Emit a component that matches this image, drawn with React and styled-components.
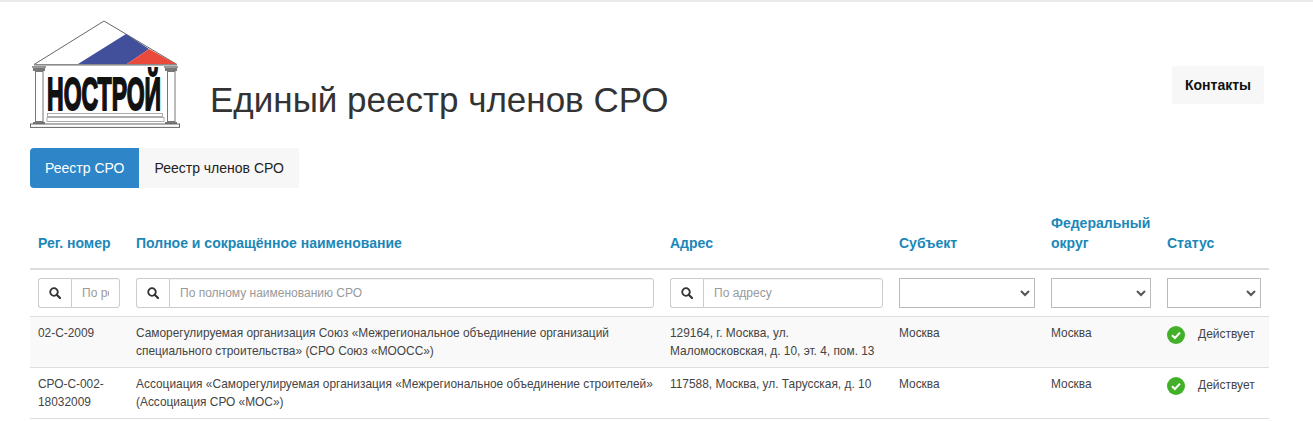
import React from "react";
import styled, { createGlobalStyle } from "styled-components";

const Global = createGlobalStyle`
  html, body {
    margin: 0;
    padding: 0;
    background: #fff;
    font-family: "Liberation Sans", Arial, sans-serif;
    color: #333;
  }
  * { box-sizing: border-box; }
`;

const Page = styled.div`
  width: 1313px;
  height: 421px;
  overflow: hidden;
  border-top: 2px solid #e9e9e9;
  padding: 18px 44px 0 30px;
`;

const Header = styled.header`
  display: flex;
  align-items: flex-start;
  height: 128px;
`;

const Title = styled.h1`
  margin: 58px 0 0 30px;
  font-size: 35px;
  line-height: 44px;
  font-weight: 400;
  flex: 1;
`;

const ContactButton = styled.a`
  margin: 46px 5px 0 0;
  width: 92px;
  height: 38px;
  display: flex;
  align-items: center;
  justify-content: center;
  background: #f7f7f7;
  border-radius: 3px;
  color: #111;
  font-size: 14px;
  font-weight: 700;
`;

const Tabs = styled.nav`
  display: flex;
  height: 40px;
`;

const Tab = styled.a`
  display: flex;
  align-items: center;
  padding: 0 15px;
  font-size: 14px;
  color: ${(p) => (p.$active ? "#fff" : "#222")};
  background: ${(p) => (p.$active ? "#2e86c9" : "#f7f7f7")};
  border-radius: ${(p) => (p.$active ? "4px 0 0 4px" : "0")};
`;

const Table = styled.table`
  width: 1239px;
  margin-top: 17px;
  border-collapse: collapse;
  table-layout: fixed;
  font-size: 11.9px;
  line-height: 18px;
`;

const HeadCell = styled.th`
  padding: 8px 8px 15px;
  height: 63px;
  vertical-align: bottom;
  text-align: left;
  font-size: 14px;
  line-height: 20px;
  font-weight: 700;
  color: #1b87b8;
  border-bottom: 2px solid #ddd;
`;

const FilterCell = styled.td`
  padding: 8px;
  height: 47px;
  border-bottom: 1px solid #ddd;
`;

const Row = styled.tr`
  background: ${(p) => (p.$odd ? "#f9f9f9" : "#fff")};
`;

const Cell = styled.td`
  padding: 7px 8px;
  height: 50px;
  vertical-align: top;
  color: #444;
  border-bottom: 1px solid #ddd;
`;

const InputGroup = styled.div`
  display: flex;
  height: 30px;
`;

const SearchAddon = styled.span`
  flex: none;
  width: 33px;
  display: flex;
  align-items: center;
  justify-content: center;
  border: 1px solid #ccc;
  border-right: 0;
  border-radius: 3px 0 0 3px;
  color: #333;
`;

const SearchInput = styled.input`
  flex: 1;
  min-width: 0;
  width: 100%;
  height: 30px;
  padding: 0 10px;
  border: 1px solid #ccc;
  border-radius: 0 3px 3px 0;
  outline: 0;
  font: 12px "Liberation Sans", Arial, sans-serif;
  box-shadow: inset 0 1px 1px rgba(0, 0, 0, 0.05);
  &::placeholder {
    color: #999;
    opacity: 1;
  }
`;

const SelectBox = styled.div`
  height: 30px;
  width: ${(p) => p.$width}px;
  display: flex;
  align-items: center;
  justify-content: flex-end;
  padding-right: 1px;
  border: 1px solid #bbb;
  background: #fff;
  color: #555;
`;

const StatusLine = styled.div`
  display: flex;
  align-items: flex-start;
  gap: 13px;
`;

const StatusText = styled.span`
  margin-top: 1px;
  font-size: 12px;
`;

const StatusIcon = styled.svg`
  flex: none;
  margin-top: 2px;
`;

function Logo() {
  return (
    <svg width="150" height="108" viewBox="0 0 150 108">
      <polygon points="4,44.5 74,1 147,44.5" fill="#fff" stroke="#555" strokeWidth="0.9" />
      <polygon points="48,44 96,14 119,29 97,44" fill="#42509b" />
      <polygon points="97,44 119,29 146,44" fill="#ea4a3c" />
      <rect x="4" y="44" width="143" height="1.6" fill="#8a8a8a" />
      <rect x="2" y="46" width="14" height="2" fill="#999" />
      <rect x="3" y="48" width="12" height="3" fill="#777" />
      <rect x="134" y="46" width="14" height="2" fill="#999" />
      <rect x="135" y="48" width="12" height="3" fill="#777" />
      <rect x="5.5" y="51.5" width="7.5" height="50" fill="#fff" stroke="#777" />
      <rect x="137.5" y="51.5" width="7.5" height="50" fill="#fff" stroke="#777" />
      <rect x="3" y="102" width="12" height="2" fill="#777" />
      <rect x="135" y="102" width="12" height="2" fill="#777" />
      <text
        transform="translate(17 90) scale(0.49 1)"
        fontFamily='"Liberation Sans", Arial, sans-serif'
        fontWeight="700"
        fontSize="47"
        fill="#111"
        stroke="#111"
        strokeWidth="2"
      >
        НОСТРОЙ
      </text>
      <rect x="17.5" y="93.5" width="115" height="3" fill="#fff" stroke="#999" strokeWidth="0.8" />
      <rect x="17" y="97.5" width="117" height="4" fill="#fff" stroke="#999" strokeWidth="0.8" />
      <rect x="0.5" y="104" width="149" height="3.4" fill="#fff" stroke="#666" />
    </svg>
  );
}

function SearchGlyph() {
  return (
    <svg width="12" height="12" viewBox="0 0 12 12" fill="none" stroke="#333" strokeWidth="1.8">
      <circle cx="5" cy="5" r="3.8" />
      <path d="M7.7 7.7 11 11" strokeLinecap="round" strokeWidth="2.2" />
    </svg>
  );
}

function Chevron() {
  return (
    <svg width="16" height="16" viewBox="0 0 16 16" fill="none" stroke="#555" strokeWidth="2">
      <path d="M4 6 8 10 12 6" />
    </svg>
  );
}

function Search({ placeholder }) {
  return (
    <InputGroup>
      <SearchAddon>
        <SearchGlyph />
      </SearchAddon>
      <SearchInput placeholder={placeholder} readOnly />
    </InputGroup>
  );
}

function Status() {
  return (
    <StatusLine>
      <StatusIcon width="18" height="18" viewBox="0 0 18 18">
        <circle cx="9" cy="9" r="9" fill="#43b02a" />
        <path d="M5 9.3 7.9 12 13 6.6" fill="none" stroke="#fff" strokeWidth="2" />
      </StatusIcon>
      <StatusText>Действует</StatusText>
    </StatusLine>
  );
}

const rows = [
  {
    num: "02-С-2009",
    name: "Саморегулируемая организация Союз «Межрегиональное объединение организаций специального строительства» (СРО Союз «МООСС»)",
    address: "129164, г. Москва, ул. Маломосковская, д. 10, эт. 4, пом. 13",
  },
  {
    num: "СРО-С-002-18032009",
    name: "Ассоциация «Саморегулируемая организация «Межрегиональное объединение строителей» (Ассоциация СРО «МОС»)",
    address: "117588, Москва, ул. Тарусская, д. 10",
  },
];

export default function App() {
  return (
    <Page>
      <Global />
      <Header>
        <Logo />
        <Title>Единый реестр членов СРО</Title>
        <ContactButton>Контакты</ContactButton>
      </Header>
      <Tabs>
        <Tab $active>Реестр СРО</Tab>
        <Tab>Реестр членов СРО</Tab>
      </Tabs>
      <Table>
        <colgroup>
          <col width="98" />
          <col width="534" />
          <col width="229" />
          <col width="152" />
          <col width="116" />
          <col width="110" />
        </colgroup>
        <thead>
          <tr>
            <HeadCell>Рег. номер</HeadCell>
            <HeadCell>Полное и сокращённое наименование</HeadCell>
            <HeadCell>Адрес</HeadCell>
            <HeadCell>Субъект</HeadCell>
            <HeadCell>Федеральный округ</HeadCell>
            <HeadCell>Статус</HeadCell>
          </tr>
        </thead>
        <tbody>
          <tr>
            <FilterCell>
              <Search placeholder="По рег. номеру" />
            </FilterCell>
            <FilterCell>
              <Search placeholder="По полному наименованию СРО" />
            </FilterCell>
            <FilterCell>
              <Search placeholder="По адресу" />
            </FilterCell>
            <FilterCell>
              <SelectBox $width={136}>
                <Chevron />
              </SelectBox>
            </FilterCell>
            <FilterCell>
              <SelectBox $width={100}>
                <Chevron />
              </SelectBox>
            </FilterCell>
            <FilterCell>
              <SelectBox $width={94}>
                <Chevron />
              </SelectBox>
            </FilterCell>
          </tr>
          {rows.map((row, i) => (
            <Row key={row.num} $odd={i === 0}>
              <Cell>{row.num}</Cell>
              <Cell>{row.name}</Cell>
              <Cell>{row.address}</Cell>
              <Cell>Москва</Cell>
              <Cell>Москва</Cell>
              <Cell>
                <Status />
              </Cell>
            </Row>
          ))}
        </tbody>
      </Table>
    </Page>
  );
}
